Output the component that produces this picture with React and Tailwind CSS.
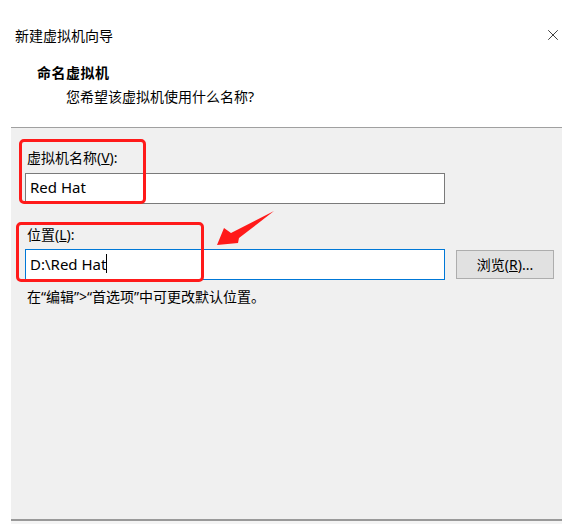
import { X } from "lucide-react";

const font = { fontFamily: '"Noto Sans", "Noto Sans CJK SC", sans-serif' };

export default function App() {
  return (
    <div
      className="relative w-[571px] h-[530px] bg-white text-[14px] leading-[20px] text-black overflow-hidden"
      style={font}
    >
      {/* Header */}
      <div className="relative h-[127px]">
        <div className="pt-[26px] pl-[15px]">新建虚拟机向导</div>
        <button className="absolute right-[9px] top-[26px] text-black">
          <X size={18} strokeWidth={1} />
        </button>
        <div className="mt-[17px] pl-[37px] font-bold tracking-[0.5px]">命名虚拟机</div>
        <div className="mt-[4px] pl-[66px]">您希望该虚拟机使用什么名称?</div>
      </div>

      {/* Body panel */}
      <div className="ml-[11px] w-[551px] h-[394px] bg-[#f0f0f0] border-t border-[#a0a0a0] border-b-2 border-b-[#999999] pt-[20px] pl-[14px]">
        <div className="pl-[2px]">
          虚拟机名称(<span className="underline">V</span>):
        </div>
        <div className="mt-[5px] w-[420px] h-[31px] bg-white border border-[#7a7a7a] flex items-center pl-[4px] pb-[3px] text-[15px]">
          Red Hat
        </div>

        <div className="mt-[21px] pl-[2px]">
          位置(<span className="underline">L</span>):
        </div>
        <div className="mt-[4px] flex items-center">
          <div className="w-[420px] h-[31px] bg-white border border-[#0078d7] flex items-center pl-[4px] pb-[2px] text-[15px]">
            <span>D:\Red Hat</span>
            <span className="inline-block w-px h-[19px] bg-black" />
          </div>
          <button className="ml-[11px] w-[98px] h-[29px] bg-[#e1e1e1] border border-[#adadad] text-[14px]">
            浏览(<span className="underline">R</span>)...
          </button>
        </div>

        <div className="mt-[7px] pl-[2px]">在“编辑”&gt;“首选项”中可更改默认位置。</div>
      </div>
      <div className="ml-[11px] w-[551px] h-[3px] bg-[#f4f4f4]" />

      {/* Annotations */}
      <div className="absolute left-[19px] top-[139px] w-[127px] h-[65px] border-[3px] border-[#ff1a1a] rounded-[5px]" />
      <div className="absolute left-[16px] top-[222px] w-[188px] h-[60px] border-[3px] border-[#ff1a1a] rounded-[5px]" />
      <svg className="absolute left-[210px] top-[205px]" width="70" height="45" viewBox="0 0 70 45">
        <polygon
          points="7,40 14,23 21,28 64,6 29,33 28,38"
          fill="#ff1a1a"
        />
      </svg>
    </div>
  );
}
